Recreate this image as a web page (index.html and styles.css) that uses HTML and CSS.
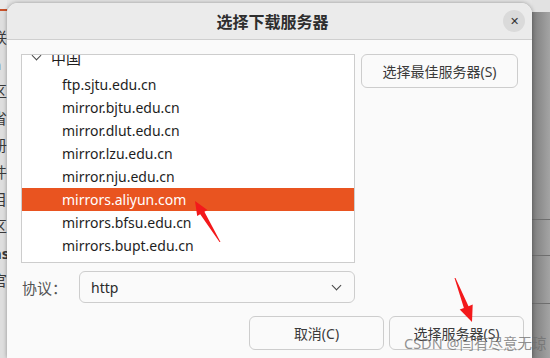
FILE: index.html
```html
<!DOCTYPE html>
<html lang="zh">
<head>
    <meta charset="UTF-8">
    <title>选择下载服务器</title>
    <link rel="stylesheet" href="styles.css">
</head>
<body>
    <!-- Ventana de fondo (recortada) -->
    <div class="back-left">
        <span>联</span><span>n</span><span>区</span><span>省</span><span>册</span><span>件</span><span>目</span><span>区</span><span class="b">ns</span><span>官</span>
    </div>

    <!-- Dialogo principal -->
    <div class="dialog">
        <div class="header">
            <div class="title">选择下载服务器</div>
            <button class="close">&#x2715;</button>
        </div>

        <div class="body">
            <div class="top-row">
                <div class="list">
                    <div class="list-inner">
                        <div class="row group"><span class="chev"></span>中国</div>
                        <div class="row">ftp.sjtu.edu.cn</div>
                        <div class="row">mirror.bjtu.edu.cn</div>
                        <div class="row">mirror.dlut.edu.cn</div>
                        <div class="row">mirror.lzu.edu.cn</div>
                        <div class="row">mirror.nju.edu.cn</div>
                        <div class="row selected">mirrors.aliyun.com</div>
                        <div class="row">mirrors.bfsu.edu.cn</div>
                        <div class="row">mirrors.bupt.edu.cn</div>
                        <div class="row">mirrors.cloud.tencent.com</div>
                    </div>
                </div>
                <button class="btn best">选择最佳服务器(S)</button>
            </div>

            <div class="proto-row">
                <span class="label">协议：</span>
                <div class="combo">
                    <span>http</span>
                    <span class="combo-chev"></span>
                </div>
            </div>

            <div class="actions">
                <button class="btn action">取消(C)</button>
                <button class="btn action">选择服务器(S)</button>
            </div>
        </div>
    </div>

    <div class="back-right">
        <div class="line l1"></div>
        <div class="line l2"></div>
        <div class="line l3"></div>
    </div>

    <!-- Flechas de anotacion -->
    <svg class="arrows" width="550" height="358" viewBox="0 0 550 358">
        <polygon points="195,201 207.4,209.9 204.4,211.7 220.5,242 219.5,242 200.2,214.3 197.2,216.1" fill="#f3191b"/>
        <polygon points="472,322 472.7,304.6 468.5,306.2 455.5,278 454.5,278 463.9,308 459.7,309.6" fill="#f3191b"/>
    </svg>

    <div class="watermark">CSDN @闫有尽意无琼</div>
</body>
</html>
```

FILE: styles.css
```css
body {
    margin: 0;
    width: 550px;
    height: 358px;
    overflow: hidden;
    display: flex;
    position: relative;
    background: #e4e4e4;
    font-family: "Noto Sans", "Noto Sans CJK SC", sans-serif;
}

.back-left {
    width: 7px;
    padding-top: 28px;
    display: flex;
    flex-direction: column;
    gap: 9px;
    overflow: hidden;
    background: linear-gradient(#e9e9e9 0, #e9e9e9 9px, #c8522a 9px, #c8522a 11px, #dedede 11px);
    font-size: 15px;
    color: #3a3a3a;
    line-height: 18px;
}

.back-left span {
    margin-left: -8px;
    white-space: nowrap;
}

.back-left .b {
    font-weight: bold;
}

.dialog {
    width: 525px;
    margin-top: 3px;
    flex-shrink: 0;
    background: #fafafa;
    border-radius: 11px 11px 0 0;
    box-shadow: 0 0 4px rgba(0, 0, 0, 0.35);
    position: relative;
    z-index: 1;
}

.header {
    height: 36px;
    border-bottom: 1px solid #cfcfcf;
    background: #ebebeb;
    border-radius: 11px 11px 0 0;
    display: flex;
    align-items: center;
    justify-content: center;
    position: relative;
}

.title {
    font-size: 16px;
    font-weight: bold;
    color: #2e2e2e;
    margin-left: 6px;
}

.close {
    position: absolute;
    right: 7px;
    top: 7px;
    width: 22px;
    height: 22px;
    border-radius: 50%;
    border: none;
    background: #dadada;
    color: #333;
    font-size: 11px;
    padding: 0;
    line-height: 22px;
}

.body {
    padding: 14px 8px 0 14px;
}

.top-row {
    display: flex;
    gap: 6px;
    align-items: flex-start;
}

.list {
    width: 332px;
    height: 207px;
    border: 1px solid #cdcdcd;
    background: #fff;
    overflow: hidden;
}

.list-inner {
    margin-top: -5px;
}

.row {
    height: 23px;
    line-height: 23px;
    padding-left: 40px;
    font-size: 14px;
    color: #1e1e1e;
    white-space: nowrap;
}

.row.group {
    padding-left: 8px;
    display: flex;
    align-items: flex-start;
    line-height: 16px;
    font-size: 15px;
}

.chev {
    width: 6px;
    height: 6px;
    border-right: 1px solid #444;
    border-bottom: 1px solid #444;
    transform: rotate(45deg);
    margin: 2px 11px 0 3px;
}

.row.selected {
    background: #e95420;
    color: #fff;
}

.btn {
    font-family: "Noto Sans", "Noto Sans CJK SC", sans-serif;
    font-size: 14px;
    color: #3a3a3a;
    background: #fafafa;
    border: 1px solid #cdcdcd;
    border-radius: 6px;
    padding: 0;
}

.best {
    width: 157px;
    height: 34px;
}

.proto-row {
    display: flex;
    align-items: center;
    margin-top: 8px;
}

.label {
    width: 57px;
    padding-left: 1px;
    font-size: 15px;
    color: #555;
}

.combo {
    box-sizing: border-box;
    width: 276px;
    height: 32px;
    border: 1px solid #cdcdcd;
    border-radius: 6px;
    background: #fafafa;
    display: flex;
    align-items: center;
    justify-content: space-between;
    padding: 0 14px 0 11px;
    font-size: 14px;
    color: #2a2a2a;
}

.combo-chev {
    width: 6px;
    height: 6px;
    border-right: 1px solid #444;
    border-bottom: 1px solid #444;
    transform: rotate(45deg);
    margin-bottom: 4px;
}

.actions {
    display: flex;
    justify-content: flex-end;
    gap: 5px;
    margin-top: 13px;
}

.action {
    width: 135px;
    height: 34px;
}

.back-right {
    flex: 1;
    position: relative;
    background: linear-gradient(90deg, #7d7d7d, #a4a4a4);
}

.back-right::before {
    content: '';
    position: absolute;
    top: 0;
    left: 0;
    right: 0;
    height: 12px;
    background: #e2e2e2;
}

.line {
    position: absolute;
    left: 0;
    right: 0;
    height: 1px;
    background: #6e6e6e;
}

.l1 { top: 219px; }
.l2 { top: 255px; }
.l3 { top: 303px; }

.arrows {
    position: absolute;
    top: 0;
    left: 0;
    z-index: 5;
    pointer-events: none;
}

.watermark {
    position: absolute;
    left: 404px;
    top: 332px;
    z-index: 6;
    font-size: 14.5px;
    color: rgba(110, 110, 110, 0.75);
    white-space: nowrap;
}
```
